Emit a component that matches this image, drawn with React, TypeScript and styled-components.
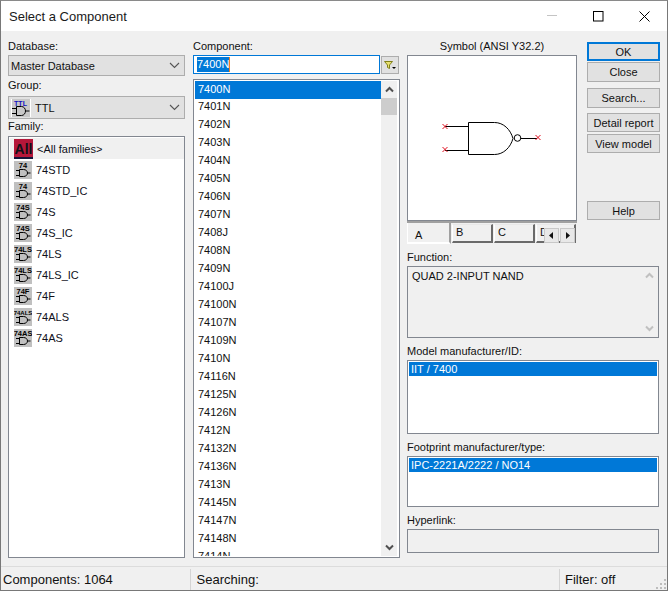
import React from "react";
import styled, { createGlobalStyle } from "styled-components";

const Global = createGlobalStyle`
  html, body { margin: 0; padding: 0; background: #f0f0f0; }
  body { font-family: "Liberation Sans", Arial, sans-serif; font-size: 11px; color: #111; }
  * { box-sizing: border-box; }
`;

const Window = styled.div`
  width: 668px;
  height: 591px;
  display: flex;
  flex-direction: column;
  background: #f0f0f0;
  border: 1px solid #787878;
  border-top-color: #8a8a8a;
  overflow: hidden;
`;

const TitleBar = styled.div`
  height: 30px;
  flex: none;
  background: #fff;
  display: flex;
  align-items: center;
  padding-left: 8px;
  font-size: 13px;
  color: #1a1a1a;
`;

const TitleText = styled.span`
  flex: 1;
`;

const WinButton = styled.div`
  width: 46px;
  height: 30px;
  display: flex;
  align-items: center;
  justify-content: center;
`;

const Body = styled.div`
  flex: 1;
  min-height: 0;
  display: flex;
  padding: 8px 7px 8px 7px;
`;

const Column = styled.div<{ $w: number; $mr?: number }>`
  width: ${(p) => p.$w}px;
  margin-right: ${(p) => p.$mr ?? 0}px;
  flex: none;
  display: flex;
  flex-direction: column;
`;

const Label = styled.div<{ $h?: number; $center?: boolean; $mt?: number }>`
  height: ${(p) => p.$h ?? 16}px;
  margin-top: ${(p) => p.$mt ?? 0}px;
  line-height: ${(p) => (p.$h ?? 16) - 2}px;
  text-align: ${(p) => (p.$center ? "center" : "left")};
  white-space: nowrap;
`;

const Select = styled.div<{ $h: number }>`
  height: ${(p) => p.$h}px;
  flex: none;
  background: #e1e1e1;
  border: 1px solid #adadad;
  display: flex;
  align-items: center;
  padding: 0 4px 0 2px;
  gap: 4px;
`;

const SelectText = styled.span`
  flex: 1;
`;

const FamilyList = styled.div`
  flex: 1;
  background: #fff;
  border: 1px solid #828790;
  padding: 1px 0 0 1px;
  min-height: 0;
`;

const FamilyRow = styled.div<{ $active?: boolean }>`
  height: 21px;
  display: flex;
  align-items: center;
  padding-left: 4px;
  gap: 4px;
  background: ${(p) => (p.$active ? "#f0f0f0" : "transparent")};
  color: #10101a;
`;

const InputRow = styled.div`
  display: flex;
  height: 19px;
  flex: none;
`;

const SearchInput = styled.div`
  width: 187px;
  height: 19px;
  background: #fff;
  border: 1px solid #0078d7;
  padding-left: 3px;
  display: flex;
  align-items: center;
`;

const Selected = styled.span`
  background: #0078d7;
  color: #fff;
  line-height: 15px;
  border-right: 1px solid #f08020;
`;

const FilterButton = styled.div`
  width: 18px;
  height: 18px;
  margin: 1px 0 0 1px;
  background: #e1e1e1;
  border: 1px solid #adadad;
  display: flex;
  align-items: center;
  justify-content: center;
`;

const ComponentList = styled.div`
  flex: 1;
  min-height: 0;
  margin-top: 5px;
  background: #fff;
  border: 1px solid #828790;
  padding: 1px 2px 1px 1px;
  display: flex;
  overflow: hidden;
`;

const Rows = styled.div`
  flex: 1;
  overflow: hidden;
`;

const CompRow = styled.div<{ $active?: boolean }>`
  height: 18px;
  line-height: 15px;
  padding-top: ${(p) => (p.$active ? 1 : 0)}px;
  padding-left: 3px;
  background: ${(p) => (p.$active ? "#0078d7" : "transparent")};
  color: ${(p) => (p.$active ? "#fff" : "#111")};
`;

const Scrollbar = styled.div<{ $w: number }>`
  width: ${(p) => p.$w}px;
  flex: none;
  background: #f0f0f0;
  display: flex;
  flex-direction: column;
  align-items: center;
  justify-content: space-between;
`;

const ScrollArrow = styled.div`
  height: 17px;
  width: 100%;
  display: flex;
  align-items: center;
  justify-content: center;
`;

const Thumb = styled.div`
  width: 100%;
  height: 17px;
  background: #cdcdcd;
`;

const ScrollTop = styled.div`
  width: 100%;
`;

const TopRow = styled.div`
  display: flex;
  gap: 10px;
  height: 205px;
  flex: none;
`;

const SymbolPane = styled.div`
  width: 170px;
  flex: none;
  display: flex;
  flex-direction: column;
`;

const SymbolBox = styled.div`
  height: 166px;
  flex: none;
  background: #fff;
  border: 1px solid #828790;
  svg { display: block; }
`;

const TabStrip = styled.div`
  position: relative;
  height: 23px;
  display: flex;
  align-items: flex-start;
  border-top: 2px solid #a0a0a0;
  overflow: hidden;
`;

const Tab = styled.div<{ $active?: boolean; $w: number }>`
  width: ${(p) => p.$w}px;
  flex: none;
  height: ${(p) => (p.$active ? 22 : 19)}px;
  margin-top: ${(p) => (p.$active ? -1 : 1)}px;
  margin-right: 1px;
  background: #f0f0f0;
  border-left: 1px solid #fff;
  border-right: 2px solid #6a6a6a;
  border-bottom: 2px solid #6a6a6a;
  border-top: 1px solid ${(p) => (p.$active ? "#fff" : "#e8e8e8")};
  padding-left: ${(p) => (p.$active ? 7 : 3)}px;
  padding-top: ${(p) => (p.$active ? 5 : 0)}px;
  line-height: 15px;
  ${(p) => (p.$active ? "border-right-color:#a0a0a0;border-bottom-color:#fff;" : "")}
`;

const TabScroller = styled.div`
  position: absolute;
  right: 2px;
  top: 5px;
  display: flex;
  gap: 1px;
`;

const TabScrollBtn = styled.div`
  width: 15px;
  height: 15px;
  background: #e8e8e8;
  border: 1px solid #c8c8c8;
  display: flex;
  align-items: center;
  justify-content: center;
`;

const ButtonCol = styled.div`
  width: 73px;
  flex: none;
  display: flex;
  flex-direction: column;
  padding-top: 3px;
`;

const Button = styled.div<{ $h: number; $mt?: number; $default?: boolean }>`
  height: ${(p) => p.$h}px;
  margin-top: ${(p) => p.$mt ?? 0}px;
  flex: none;
  background: #e1e1e1;
  border: ${(p) => (p.$default ? "2px solid #0078d7" : "1px solid #adadad")};
  display: flex;
  align-items: center;
  justify-content: center;
  white-space: nowrap;
`;

const InfoBox = styled.div<{ $h: number; $bg?: string }>`
  width: 252px;
  height: ${(p) => p.$h}px;
  flex: none;
  background: ${(p) => p.$bg ?? "#fff"};
  border: 1px solid #828790;
  padding: 1px;
  display: flex;
  flex-direction: column;
`;

const FunctionBox = styled(InfoBox)`
  flex-direction: row;
  padding: 0 0 0 4px;
`;

const FunctionText = styled.div`
  flex: 1;
  line-height: 18px;
`;

const Item = styled.div`
  height: 14px;
  line-height: 14px;
  padding-left: 2px;
  background: #0078d7;
  color: #fff;
`;

const StatusBar = styled.div`
  height: 24px;
  flex: none;
  border-top: 1px solid #dcdcdc;
  display: flex;
  align-items: stretch;
  position: relative;
  font-size: 13px;
`;

const StatusCell = styled.div<{ $w?: number }>`
  ${(p) => (p.$w ? `width:${p.$w}px;flex:none;` : "flex:1;")}
  display: flex;
  align-items: center;
  padding-left: 2px;
  border-right: 1px solid #d4d4d4;
  margin-top: 2px;
`;

const LastCell = styled(StatusCell)`
  border-right: 0;
  padding-left: 5px;
`;

const Grip = styled.svg`
  position: absolute;
  right: 0;
  bottom: 0;
`;

const GateIcon = ({ label, size = 7.5 }: { label: string; size?: number }) => (
  <svg width="18" height="18" viewBox="0 0 18 18" style={{ flex: "none" }}>
    <rect width="18" height="18" fill="#c0c0c0" />
    <text x="9" y="6.5" textAnchor="middle" fontSize={size} fontWeight="bold" fontFamily="Liberation Sans" fill="#000">
      {label}
    </text>
    <path
      d="M2 9.5h3M2 14.5h3M5.500 8.500h4c2.500 0 4 1.700 4 3.500s-1.500 3.500-4 3.500h-4zM13.500 12h3"
      fill="none"
      stroke="#000"
      strokeWidth="1"
    />
  </svg>
);

const AllIcon = () => (
  <svg width="19" height="20" viewBox="0 0 19 20" style={{ flex: "none" }}>
    <rect width="19" height="18" fill="#b5173a" />
    <rect y="18" width="19" height="2" fill="#15153a" />
    <text x="9.5" y="14.5" textAnchor="middle" fontSize="14" fontWeight="bold" fontFamily="Liberation Sans" fill="#101018">
      All
    </text>
  </svg>
);

const TtlIcon = () => (
  <svg width="20" height="18" viewBox="0 0 20 18" style={{ flex: "none" }}>
    <rect width="20" height="18" fill="#fff" />
    <rect x="1" y="0" width="18" height="18" fill="#c8c8c8" />
    <text x="9.5" y="6.5" textAnchor="middle" fontSize="7" fontWeight="bold" fontFamily="Liberation Sans" fill="#1010c0">
      TTL
    </text>
    <path d="M1 9.5h5M1 14.5h5M5.500 7.500h5c2.500 0 4 2.300 4 4.500s-1.500 4.500-4 4.500h-5zM14.500 12h4" fill="none" stroke="#000" strokeWidth="1" />
  </svg>
);

const Chevron = () => (
  <svg width="11" height="7" viewBox="0 0 11 7">
    <path d="M1 1l4.500 4.500L10 1" fill="none" stroke="#555" strokeWidth="1.100" />
  </svg>
);

const ScrollChevron = ({ up, color }: { up?: boolean; color: string }) => (
  <svg width="9" height="7" viewBox="0 0 9 7">
    <path d={up ? "M1 5.500l3.500-3.500L8 5.500" : "M1 1.500L4.500 5 8 1.500"} fill="none" stroke={color} strokeWidth="2" />
  </svg>
);

const Cross = ({ x, y }: { x: number; y: number }) => (
  <path d={`M${x - 2.5} ${y - 2.5}l5 5M${x - 2.5} ${y + 2.5}l5-5`} stroke="#e01020" strokeWidth="1" fill="none" />
);

const families = ["74STD", "74STD_IC", "74S", "74S_IC", "74LS", "74LS_IC", "74F", "74ALS", "74AS"];
const iconLabel = (f: string) => f.replace("_IC", "").replace("STD", "");
const components = [
  "7400N", "7401N", "7402N", "7403N", "7404N", "7405N", "7406N", "7407N", "7408J", "7408N",
  "7409N", "74100J", "74100N", "74107N", "74109N", "7410N", "74116N", "74125N", "74126N", "7412N",
  "74132N", "74136N", "7413N", "74145N", "74147N", "74148N", "7414N",
];

export default function App() {
  return (
    <>
      <Global />
      <Window>
        <TitleBar>
          <TitleText>Select a Component</TitleText>
          <WinButton>
            <svg width="11" height="2" viewBox="0 0 11 2"><path d="M0 .5h10" stroke="#c4c4c4" /></svg>
          </WinButton>
          <WinButton>
            <svg width="11" height="11" viewBox="0 0 11 11"><rect x=".5" y=".5" width="9.500" height="9.500" fill="none" stroke="#000" /></svg>
          </WinButton>
          <WinButton>
            <svg width="11" height="11" viewBox="0 0 11 11"><path d="M.5.500l10 10M10.500.500l-10 10" stroke="#000" /></svg>
          </WinButton>
        </TitleBar>
        <Body>
          <Column $w={177} $mr={8}>
            <Label>Database:</Label>
            <Select $h={21}>
              <SelectText>Master Database</SelectText>
              <Chevron />
            </Select>
            <Label $h={20}>Group:</Label>
            <Select $h={23}>
              <TtlIcon />
              <SelectText>TTL</SelectText>
              <Chevron />
            </Select>
            <Label $h={17}>Family:</Label>
            <FamilyList>
              <FamilyRow $active>
                <AllIcon />
                <span>&lt;All families&gt;</span>
              </FamilyRow>
              {families.map((f) => (
                <FamilyRow key={f}>
                  <GateIcon label={iconLabel(f)} size={iconLabel(f).length > 4 ? 6 : 7.5} />
                  <span>{f}</span>
                </FamilyRow>
              ))}
            </FamilyList>
          </Column>
          <Column $w={207} $mr={7}>
            <Label>Component:</Label>
            <InputRow>
              <SearchInput>
                <Selected>7400N</Selected>
              </SearchInput>
              <FilterButton>
                <svg width="14" height="12" viewBox="0 0 14 12">
                  <path d="M1.500 2.500h8L6.500 6v3.500l-2-1V6z" fill="#e8e070" stroke="#80801a" strokeWidth="1" />
                  <path d="M9 8h4l-2 2z" fill="#000" />
                </svg>
              </FilterButton>
            </InputRow>
            <ComponentList>
              <Rows>
                {components.map((c, i) => (
                  <CompRow key={c} $active={i === 0}>{c}</CompRow>
                ))}
              </Rows>
              <Scrollbar $w={16}>
                <ScrollTop>
                  <ScrollArrow><ScrollChevron up color="#505050" /></ScrollArrow>
                  <Thumb />
                </ScrollTop>
                <ScrollArrow><ScrollChevron color="#505050" /></ScrollArrow>
              </Scrollbar>
            </ComponentList>
          </Column>
          <Column $w={253}>
            <TopRow>
              <SymbolPane>
                <Label $center>Symbol (ANSI Y32.2)</Label>
                <SymbolBox>
                  <svg width="168" height="164" viewBox="408 56 168 164">
                    <path
                      d="M445 126.500h23M445 150.500h23M468.500 122.500v32h26c9 0 16-7 18.500-16-2.500-9-9.500-16-18.500-16zM521 138.500h16"
                      fill="none"
                      stroke="#000"
                      strokeWidth="1"
                    />
                    <circle cx="517.5" cy="138" r="3.3" fill="none" stroke="#000" />
                    <Cross x={445} y={126.5} />
                    <Cross x={445} y={149.5} />
                    <Cross x={538} y={137.5} />
                  </svg>
                </SymbolBox>
                <TabStrip>
                  <Tab $active $w={44}>A</Tab>
                  <Tab $w={41}>B</Tab>
                  <Tab $w={41}>C</Tab>
                  <Tab $w={40}>D</Tab>
                  <TabScroller>
                    <TabScrollBtn>
                      <svg width="5" height="7" viewBox="0 0 5 7"><path d="M4 0v7L0 3.500z" fill="#111" /></svg>
                    </TabScrollBtn>
                    <TabScrollBtn>
                      <svg width="5" height="7" viewBox="0 0 5 7"><path d="M1 0v7l4-3.500z" fill="#111" /></svg>
                    </TabScrollBtn>
                  </TabScroller>
                </TabStrip>
              </SymbolPane>
              <ButtonCol>
                <Button $h={19} $default>OK</Button>
                <Button $h={20} $mt={1}>Close</Button>
                <Button $h={20} $mt={6}>Search...</Button>
                <Button $h={19} $mt={5}>Detail report</Button>
                <Button $h={19} $mt={2}>View model</Button>
                <Button $h={19} $mt={48}>Help</Button>
              </ButtonCol>
            </TopRow>
            <Label $mt={6}>Function:</Label>
            <FunctionBox $h={72} $bg="#f0f0f0">
              <FunctionText>QUAD 2-INPUT NAND</FunctionText>
              <Scrollbar $w={18}>
                <ScrollArrow><ScrollChevron up color="#c0c0c0" /></ScrollArrow>
                <ScrollArrow><ScrollChevron color="#c0c0c0" /></ScrollArrow>
              </Scrollbar>
            </FunctionBox>
            <Label $mt={6}>Model manufacturer/ID:</Label>
            <InfoBox $h={74}>
              <Item>IIT / 7400</Item>
            </InfoBox>
            <Label $mt={6}>Footprint manufacturer/type:</Label>
            <InfoBox $h={51}>
              <Item>IPC-2221A/2222 / NO14</Item>
            </InfoBox>
            <Label $mt={6}>Hyperlink:</Label>
            <InfoBox $h={24} $bg="#f0f0f0" />
          </Column>
        </Body>
        <StatusBar>
          <StatusCell $w={190}>Components: 1064</StatusCell>
          <StatusCell $w={369}>&nbsp;Searching:</StatusCell>
          <LastCell>Filter: off</LastCell>
          <Grip width="12" height="12" viewBox="0 0 12 12">
            <path d="M9 1h2v2H9zM5 5h2v2H5zM9 5h2v2H9zM1 9h2v2H1zM5 9h2v2H5zM9 9h2v2H9z" fill="#bdbdbd" />
          </Grip>
        </StatusBar>
      </Window>
    </>
  );
}
